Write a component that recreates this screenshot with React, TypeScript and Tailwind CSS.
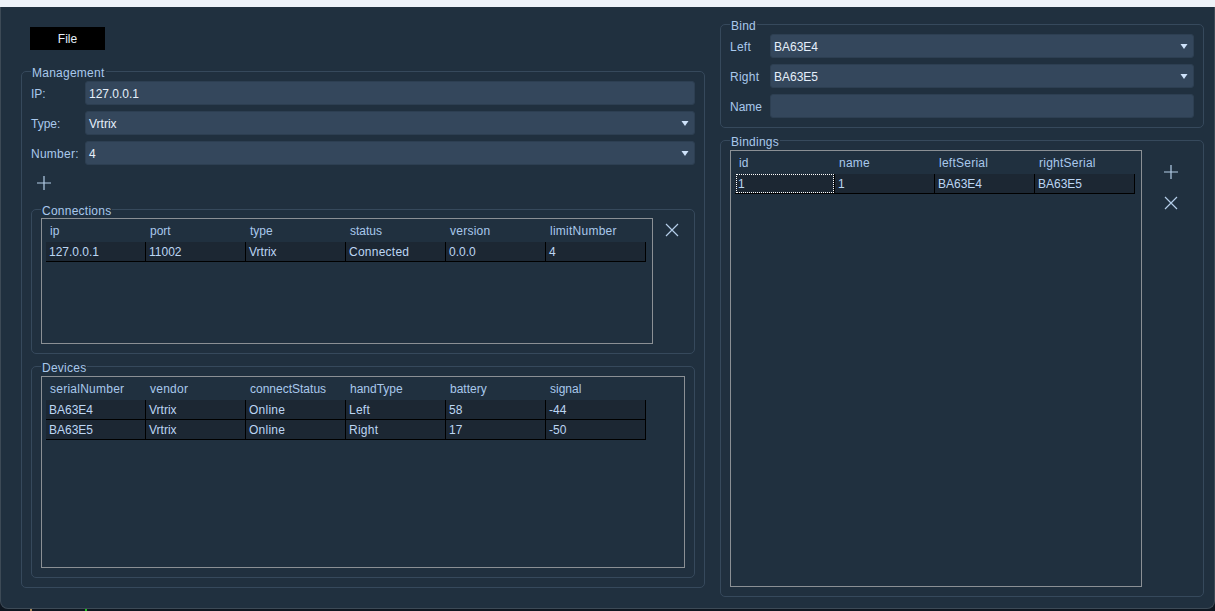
import type { ReactNode } from "react";

type TableProps = {
  headers: string[];
  rows: string[][];
  className: string;
  selectFirst?: boolean;
};

// words that come out wider in the reference than plain 12px text
const wideWords = ["Connected", "Online", "Left", "Right", "Number:", "serialNumber", "limitNumber", "version", "leftSerial", "rightSerial", "name", "vendor"];

function tracking(word: string) {
  return wideWords.includes(word) ? "tracking-[0.25px]" : "";
}

function PlusIcon() {
  return (
    <svg width="14" height="14" viewBox="0 0 14 14" className="block">
      <path d="M0 7H14M7 0V14" stroke="#b4cde8" strokeWidth="1.2" fill="none" />
    </svg>
  );
}

function CloseIcon() {
  return (
    <svg width="14" height="14" viewBox="0 0 14 14" className="block">
      <path d="M1 1L13 13M13 1L1 13" stroke="#b4cde8" strokeWidth="1.2" fill="none" />
    </svg>
  );
}

function Arrow() {
  return (
    <svg width="8" height="5" viewBox="0 0 8 5" className="block">
      <polygon points="0.5,0 7.5,0 4,5" fill="#cfe3fb" />
    </svg>
  );
}

function Group({ title, className, children }: { title: string; className: string; children: ReactNode }) {
  return (
    <fieldset className={`border border-[#36495c] rounded-[5px] ${className}`}>
      <legend className="px-[1px] h-[14px] leading-[18px] text-[12px] tracking-[0.25px] text-[#a9c8ec]">{title}</legend>
      {children}
    </fieldset>
  );
}

function Field({ label, value, select, labelWidth }: { label: string; value: string; select?: boolean; labelWidth: string }) {
  return (
    <div className="flex items-center h-[24px]">
      <div className={`${labelWidth} shrink-0 pt-[2px] text-[12px] text-[#a9c8ec] ${tracking(label)}`}>{label}</div>
      <div className="flex-1 h-[24px] flex items-center justify-between pl-[3px] pr-[5px] rounded-[3px] bg-[#34475c] border border-[#2d3f52] text-[12px] text-[#e6f0fb]">
        <span className="pt-[2px]">{value}</span>
        {select && <Arrow />}
      </div>
    </div>
  );
}

function DataTable({ headers, rows, className, selectFirst }: TableProps) {
  return (
    <div className={`border border-[#8b9095] pl-[4px] shrink-0 ${className}`}>
      <div className="flex h-[23px]">
        {headers.map((h) => (
          <div key={h} className={`w-[100px] pl-[4px] pt-[1px] leading-[23px] text-[12px] text-[#a9c8ec] ${tracking(h)}`}>
            {h}
          </div>
        ))}
      </div>
      {rows.map((row, i) => (
        <div key={i} className="flex h-[20px] w-fit bg-[#1c2733] border-b border-black">
          {row.map((cell, j) => (
            <div
              key={j}
              className={`relative w-[100px] pl-[3px] pt-[1px] leading-[19px] text-[12px] text-[#bcd6f3] border-r border-black ${tracking(cell)}`}
            >
              {cell}
              {selectFirst && j === 0 && (
                <div className="absolute left-[1px] right-0 top-0 bottom-0 border border-dotted border-white" />
              )}
            </div>
          ))}
        </div>
      ))}
    </div>
  );
}

export default function App() {
  return (
    <div
      className="w-[1215px] h-[611px] overflow-hidden bg-[#0e1620] flex flex-col"
      style={{ fontFamily: '"Liberation Sans", Arial, sans-serif' }}
    >
      <div className="h-[7px] shrink-0 bg-[#eef2f8]" />
      <div className="h-[602px] shrink-0 flex bg-[#20303f] border-l border-r border-b border-[#3d4a56] rounded-b-[8px] pl-[20px]">
        {/* left side */}
        <div className="w-[684px] shrink-0 pt-[20px]">
          <button className="block ml-[9px] w-[75px] h-[23px] bg-black text-[12px] text-[#e6f0fb]">File</button>
          <Group title="Management" className="mt-[14px] h-[524px] px-[9px]">
            <div className="pt-[3px] flex flex-col gap-[6px]">
              <Field label="IP:" value="127.0.0.1" labelWidth="w-[54px]" />
              <Field label="Type:" value="Vrtrix" select labelWidth="w-[54px]" />
              <Field label="Number:" value="4" select labelWidth="w-[54px]" />
            </div>
            <div className="h-[37px] pl-[6px] pt-[11px]">
              <PlusIcon />
            </div>
            <Group title="Connections" className="h-[152px] pl-[9px]">
              <div className="flex pt-[2px]">
                <DataTable
                  className="w-[612px] h-[126px]"
                  headers={["ip", "port", "type", "status", "version", "limitNumber"]}
                  rows={[["127.0.0.1", "11002", "Vrtrix", "Connected", "0.0.0", "4"]]}
                />
                <div className="pl-[12px] pt-[5px]">
                  <CloseIcon />
                </div>
              </div>
            </Group>
            <Group title="Devices" className="mt-[5px] h-[219px] pl-[9px]">
              <div className="pt-[3px]">
                <DataTable
                  className="w-[644px] h-[192px]"
                  headers={["serialNumber", "vendor", "connectStatus", "handType", "battery", "signal"]}
                  rows={[
                    ["BA63E4", "Vrtrix", "Online", "Left", "58", "-44"],
                    ["BA63E5", "Vrtrix", "Online", "Right", "17", "-50"],
                  ]}
                />
              </div>
            </Group>
          </Group>
        </div>

        {/* right side */}
        <div className="w-[484px] shrink-0 ml-[15px] pt-[10px]">
          <Group title="Bind" className="h-[111px] px-[9px]">
            <div className="pt-[3px] flex flex-col gap-[6px]">
              <Field label="Left" value="BA63E4" select labelWidth="w-[40px]" />
              <Field label="Right" value="BA63E5" select labelWidth="w-[40px]" />
              <Field label="Name" value="" labelWidth="w-[40px]" />
            </div>
          </Group>
          <Group title="Bindings" className="mt-[5px] h-[464px] pl-[9px]">
            <div className="flex pt-[3px]">
              <DataTable
                className="w-[412px] h-[437px]"
                headers={["id", "name", "leftSerial", "rightSerial"]}
                rows={[["1", "1", "BA63E4", "BA63E5"]]}
                selectFirst
              />
              <div className="pl-[22px] pt-[15px] flex flex-col gap-[17px]">
                <PlusIcon />
                <CloseIcon />
              </div>
            </div>
          </Group>
        </div>
      </div>
      <div className="flex h-[2px]">
        <div className="ml-[30px] w-[2px] bg-[#a88a5c]" />
        <div className="ml-[53px] w-[2px] bg-[#22c422]" />
      </div>
    </div>
  );
}
